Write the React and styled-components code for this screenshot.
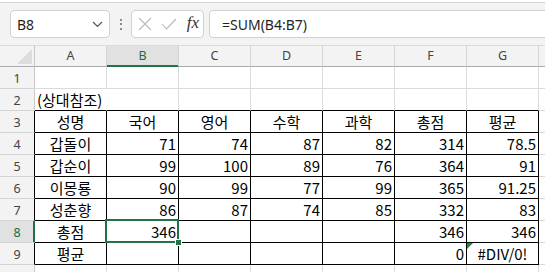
import styled, { createGlobalStyle } from 'styled-components'

const GREEN = '#217346'
const GRID = '#dadada'

const Global = createGlobalStyle`
  html, body { margin: 0; padding: 0; background: #fff; overflow: hidden; }
  body { width: 545px; height: 272px; }
`

const Page = styled.div`
  width: 545px;
  height: 272px;
  overflow: hidden;
  display: flex;
  flex-direction: column;
  background: #f3f3f3;
`

const TopStrip = styled.div`
  height: 2px;
  background: #fff;
  border-bottom: 1px solid #d6d6d6;
  flex-shrink: 0;
`

const FormulaBar = styled.div`
  height: 42px;
  flex-shrink: 0;
  display: flex;
  align-items: flex-start;
  padding: 7px 0 0 10px;
  box-sizing: border-box;
  font-family: "Noto Sans", "Open Sans", sans-serif;
  color: #1f1f1f;
`

const Box = styled.div`
  height: 28px;
  box-sizing: border-box;
  background: #fff;
  border: 1px solid #d1d1d1;
  border-radius: 4px;
  display: flex;
  align-items: center;
`

const NameBox = styled(Box)`
  width: 100px;
  padding: 0 6px 0 6px;
  justify-content: space-between;
  font-size: 14px;
`

const Dots = styled.div`
  width: 21px;
  height: 28px;
  display: flex;
  flex-direction: column;
  align-items: center;
  justify-content: center;
  gap: 2.5px;
  & span {
    width: 2px;
    height: 2px;
    background: #8a8a8a;
  }
`

const FuncBox = styled(Box)`
  width: 73px;
  padding: 0 4px 0 6px;
  justify-content: space-between;
`

const Fx = styled.span`
  font-family: "Liberation Serif", serif;
  font-style: italic;
  font-size: 17px;
  color: #333;
  margin-top: -2px;
`

const FormulaInput = styled(Box)`
  flex: 1;
  margin-left: 5px;
  margin-right: -6px;
  padding-left: 12px;
  font-size: 14px;
`

const Sheet = styled.div`
  flex: 1;
  display: grid;
  grid-template-columns: 35px repeat(8, 72px);
  grid-template-rows: 22px repeat(10, 22px);
  background: #fff;
  font-family: "Noto Sans CJK KR", "Noto Sans", sans-serif;
`

const Corner = styled.div`
  position: relative;
  background: #f3f3f3;
  border-top: 1px solid ${GRID};
  border-right: 1px solid #c9c9c9;
  border-bottom: 1px solid #ababab;
  &::after {
    content: '';
    position: absolute;
    right: 2px;
    bottom: 2px;
    width: 0;
    height: 0;
    border-left: 15px solid transparent;
    border-bottom: 15px solid #dcdcdc;
  }
`

const ColHead = styled.div`
  background: ${(p) => (p.$active ? '#e1e1e1' : '#f3f3f3')};
  border-top: 1px solid ${GRID};
  border-right: 1px solid #d4d4d4;
  border-bottom: 1px solid ${(p) => (p.$active ? GREEN : '#ababab')};
  box-shadow: ${(p) => (p.$active ? `inset 0 -1px 0 ${GREEN}` : 'none')};
  color: ${(p) => (p.$active ? '#1d6b40' : '#444')};
  font-family: "Noto Sans", "Open Sans", sans-serif;
  font-size: 12.5px;
  line-height: 20px;
  text-align: center;
`

const RowHead = styled.div`
  background: ${(p) => (p.$active ? '#e1e1e1' : '#f3f3f3')};
  border-bottom: 1px solid #d4d4d4;
  border-right: 1px solid ${(p) => (p.$active ? GREEN : p.$dark ? '#000' : '#c9c9c9')};
  box-shadow: ${(p) => (p.$active ? `inset -1px 0 0 ${GREEN}` : 'none')};
  color: ${(p) => (p.$active ? '#1d6b40' : '#444')};
  font-family: "Noto Sans", "Open Sans", sans-serif;
  font-size: 12.5px;
  line-height: 23px;
  text-align: center;
`

const Cell = styled.div`
  position: relative;
  box-sizing: border-box;
  border-right: 1px solid ${(p) => (p.$right === 'black' ? '#000' : p.$right === 'none' ? '#fff' : GRID)};
  border-bottom: 1px solid ${(p) => (p.$bottom ? '#000' : GRID)};
  font-size: 15px;
  line-height: 21px;
  color: #000;
  white-space: nowrap;
  text-align: ${(p) => p.$align || 'left'};
  padding: 0 2px;
  z-index: ${(p) => (p.$over ? 2 : 0)};
`

const Selection = styled.div`
  position: absolute;
  top: -2px;
  left: -2px;
  right: -1px;
  bottom: -1px;
  border: 2px solid ${GREEN};
  pointer-events: none;
  &::after {
    content: '';
    position: absolute;
    right: -5px;
    bottom: -5px;
    width: 5px;
    height: 5px;
    background: ${GREEN};
    border: 1px solid #fff;
  }
`

const ErrorMark = styled.div`
  position: absolute;
  top: 0;
  left: 0;
  width: 0;
  height: 0;
  border-top: 6px solid #1e8b3c;
  border-right: 6px solid transparent;
`

// H is only a sliver at the right edge, its letter falls outside the window
const cols = ['A', 'B', 'C', 'D', 'E', 'F', 'G', 'H']

const rows = [
  [],
  ['(상대참조)'],
  ['성명', '국어', '영어', '수학', '과학', '총점', '평균'],
  ['갑돌이', 71, 74, 87, 82, 314, 78.5],
  ['갑순이', 99, 100, 89, 76, 364, 91],
  ['이몽룡', 90, 99, 77, 99, 365, 91.25],
  ['성춘향', 86, 87, 74, 85, 332, 83],
  ['총점', 346, '', '', '', 346, 346],
  ['평균', '', '', '', '', 0, '#DIV/0!'],
  [],
]

function Chevron() {
  return (
    <svg width="11" height="7" viewBox="0 0 11 7">
      <polyline points="1,1 5.5,5.5 10,1" fill="none" stroke="#555" strokeWidth="1.2" />
    </svg>
  )
}

function Cross() {
  return (
    <svg width="14" height="14" viewBox="0 0 14 14">
      <path d="M1 1 L13 13 M13 1 L1 13" stroke="#b8b8b8" strokeWidth="1.1" />
    </svg>
  )
}

function Check() {
  return (
    <svg width="16" height="12" viewBox="0 0 16 12">
      <polyline points="1,6 5.5,11 15,1" fill="none" stroke="#b8b8b8" strokeWidth="1.1" />
    </svg>
  )
}

export default function App() {
  return (
    <Page>
      <Global />
      <TopStrip />
      <FormulaBar>
        <NameBox>
          <span>B8</span>
          <Chevron />
        </NameBox>
        <Dots>
          <span />
          <span />
          <span />
        </Dots>
        <FuncBox>
          <Cross />
          <Check />
          <Fx>fx</Fx>
        </FuncBox>
        <FormulaInput>=SUM(B4:B7)</FormulaInput>
      </FormulaBar>
      <Sheet>
        <Corner />
        {cols.map((c) => (
          <ColHead key={c} $active={c === 'B'}>
            {c === 'H' ? '' : c}
          </ColHead>
        ))}
        {rows.map((row, r) => {
          const n = r + 1
          const inTable = n >= 3 && n <= 9
          return [
            <RowHead key={'h' + n} $active={n === 8} $dark={inTable}>
              {n < 10 ? n : ''}
            </RowHead>,
            ...cols.map((c, ci) => {
              const v = row[ci]
              const inCols = ci < 7
              const boxed = inTable && inCols
              let right = boxed ? 'black' : 'grid'
              if (n === 2 && ci === 0) right = 'none'
              const isText = typeof v === 'string'
              let align = isText ? 'center' : 'right'
              if (n === 2) align = 'left'
              return (
                <Cell
                  key={c + n}
                  $right={right}
                  $bottom={(boxed || (n === 2 && inCols))}
                  $align={align}
                  $over={n === 8 && ci === 1}
                >
                  {v}
                  {n === 8 && ci === 1 && <Selection />}
                  {n === 9 && ci === 6 && <ErrorMark />}
                </Cell>
              )
            }),
          ]
        })}
      </Sheet>
    </Page>
  )
}
